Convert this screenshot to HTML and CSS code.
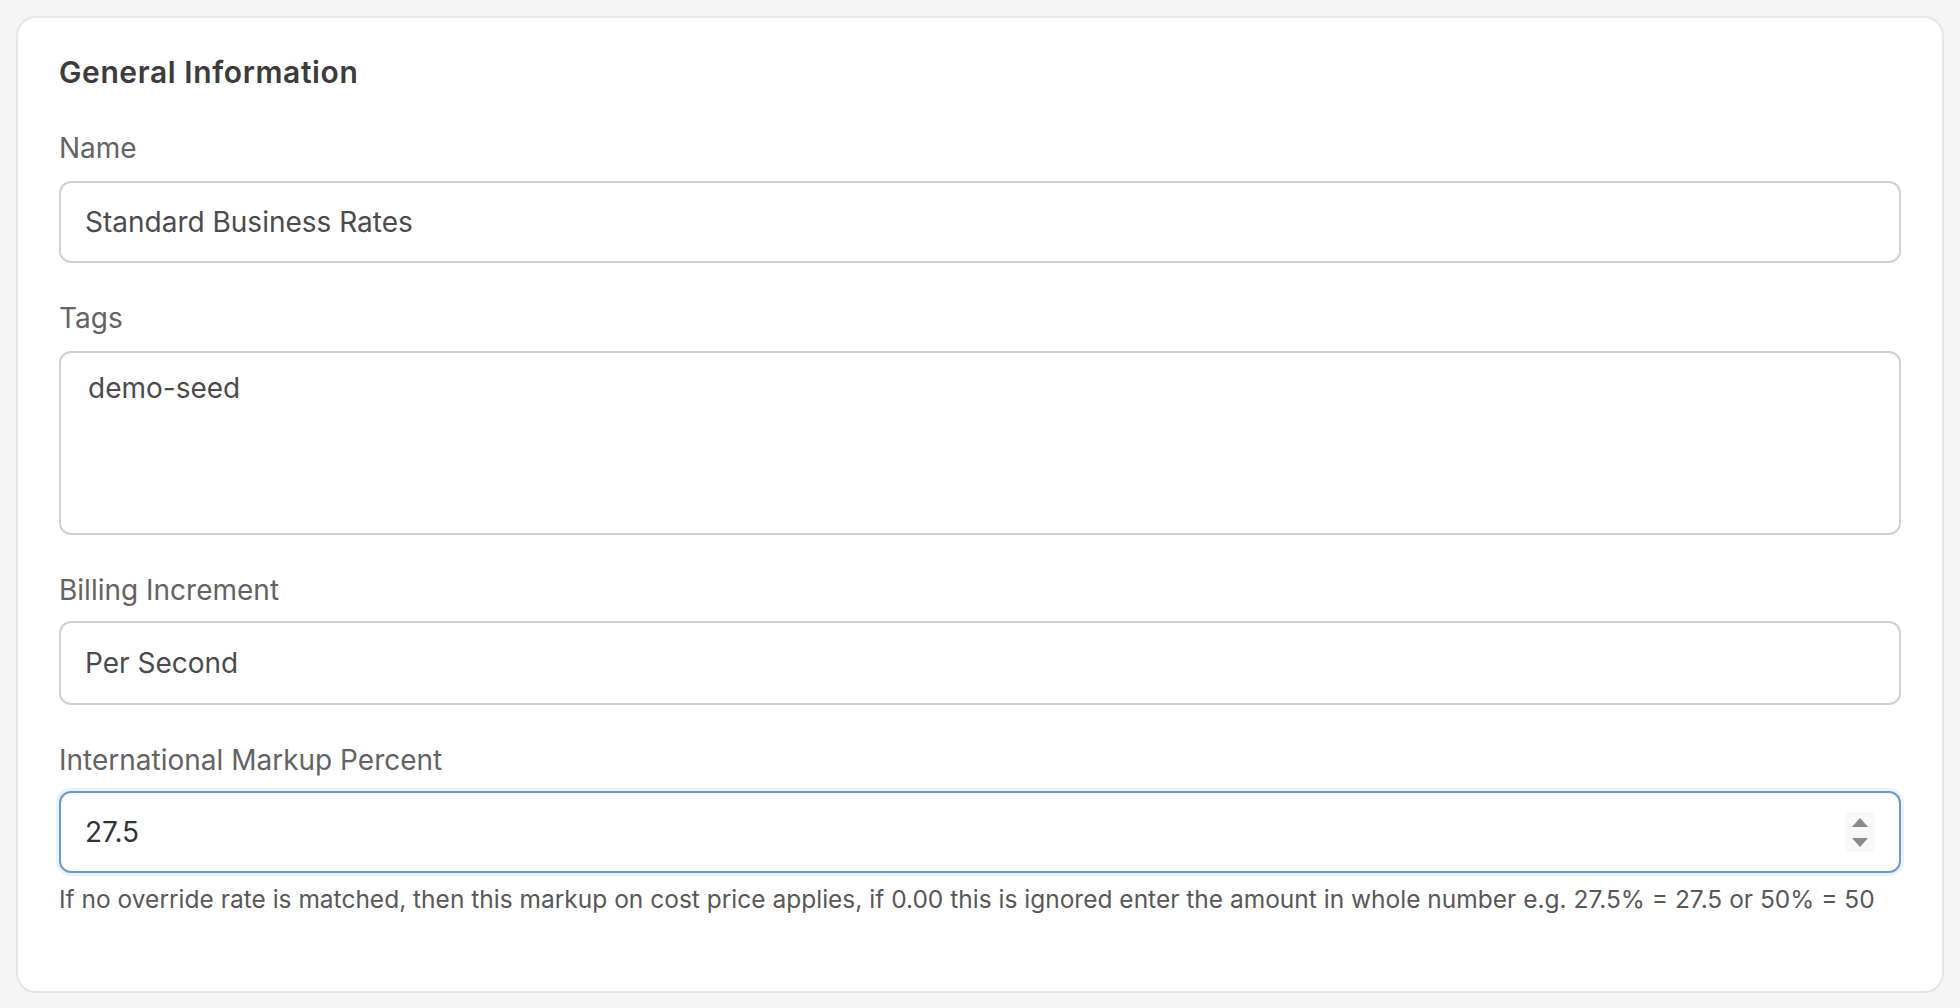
FILE: index.html
```html
<!DOCTYPE html>
<html lang="en">
<head>
<meta charset="utf-8">
<title>Rate Plan – General Information</title>
<link rel="stylesheet" href="styles.css">
</head>
<body>
  <section class="card">
    <h2 class="card-title">General Information</h2>

    <div class="field">
      <label class="label" for="name">Name</label>
      <input class="control" id="name" type="text" value="Standard Business Rates">
    </div>

    <div class="field">
      <label class="label" for="tags">Tags</label>
      <textarea class="control control--tags" id="tags">demo-seed</textarea>
    </div>

    <div class="field field--tight">
      <label class="label" for="increment">Billing Increment</label>
      <input class="control control--select" id="increment" type="text" value="Per Second">
    </div>

    <div class="field field--tight">
      <label class="label" for="markup">International Markup Percent</label>
      <div class="number-wrap">
        <input class="control control--focus" id="markup" type="text" value="27.5">
        <span class="spinner" aria-hidden="true">
          <span class="spin-up"></span>
          <span class="spin-down"></span>
        </span>
      </div>
      <p class="help">If no override rate is matched, then this markup on cost price applies, if 0.00 this is ignored enter the amount in whole number e.g. 27.5% = 27.5 or 50% = 50</p>
    </div>
  </section>
</body>
</html>
```

FILE: styles.css
```css
* {
  box-sizing: border-box;
}

html,
body {
  margin: 0;
  background: #f5f5f5;
}

body {
  padding: 16px;
  font-family: Inter, "Noto Sans", sans-serif;
}

.card {
  background: #ffffff;
  border: 2px solid #e6e6e6;
  border-radius: 20px;
  padding: 34px 41px 40px;
}

.card-title {
  margin: 0 0 35px;
  font-size: 30px;
  line-height: 40px;
  font-weight: 600;
  letter-spacing: 0.6px;
  color: #3c3c3c;
}

.field {
  display: flex;
  flex-direction: column;
  margin-bottom: 34px;
}

.label {
  display: block;
  font-size: 28px;
  line-height: 42px;
  color: #636363;
  margin-bottom: 12px;
}

.field--tight .label {
  margin-bottom: 10px;
}

.control {
  display: block;
  width: 100%;
  height: 82px;
  margin: 0;
  padding: 0 24px;
  border: 2px solid #d0d0d0;
  border-radius: 12px;
  background: #ffffff;
  font-family: Inter, "Noto Sans", sans-serif;
  font-size: 28px;
  color: #4b4b4b;
  outline: none;
}

.control--select {
  height: 84px;
}

.control--tags {
  height: 184px;
  padding: 14px 27px;
  line-height: 42px;
  resize: none;
}

.number-wrap {
  position: relative;
}

.control--focus {
  border-color: #6b9bc7;
  box-shadow: 0 0 0 3px #e9f1f9;
  color: #333333;
}

.spinner {
  position: absolute;
  right: 26px;
  top: 21px;
  width: 30px;
  height: 40px;
  background: #f8f8f8;
  display: flex;
  flex-direction: column;
  align-items: center;
  justify-content: center;
  gap: 11px;
}

.spin-up,
.spin-down {
  width: 0;
  height: 0;
  border-left: 8px solid transparent;
  border-right: 8px solid transparent;
}

.spin-up {
  border-bottom: 9px solid #8a8a8a;
}

.spin-down {
  border-top: 9px solid #8a8a8a;
}

.help {
  margin: 8px 0 0;
  font-size: 24.5px;
  line-height: 36px;
  color: #585858;
}
```
